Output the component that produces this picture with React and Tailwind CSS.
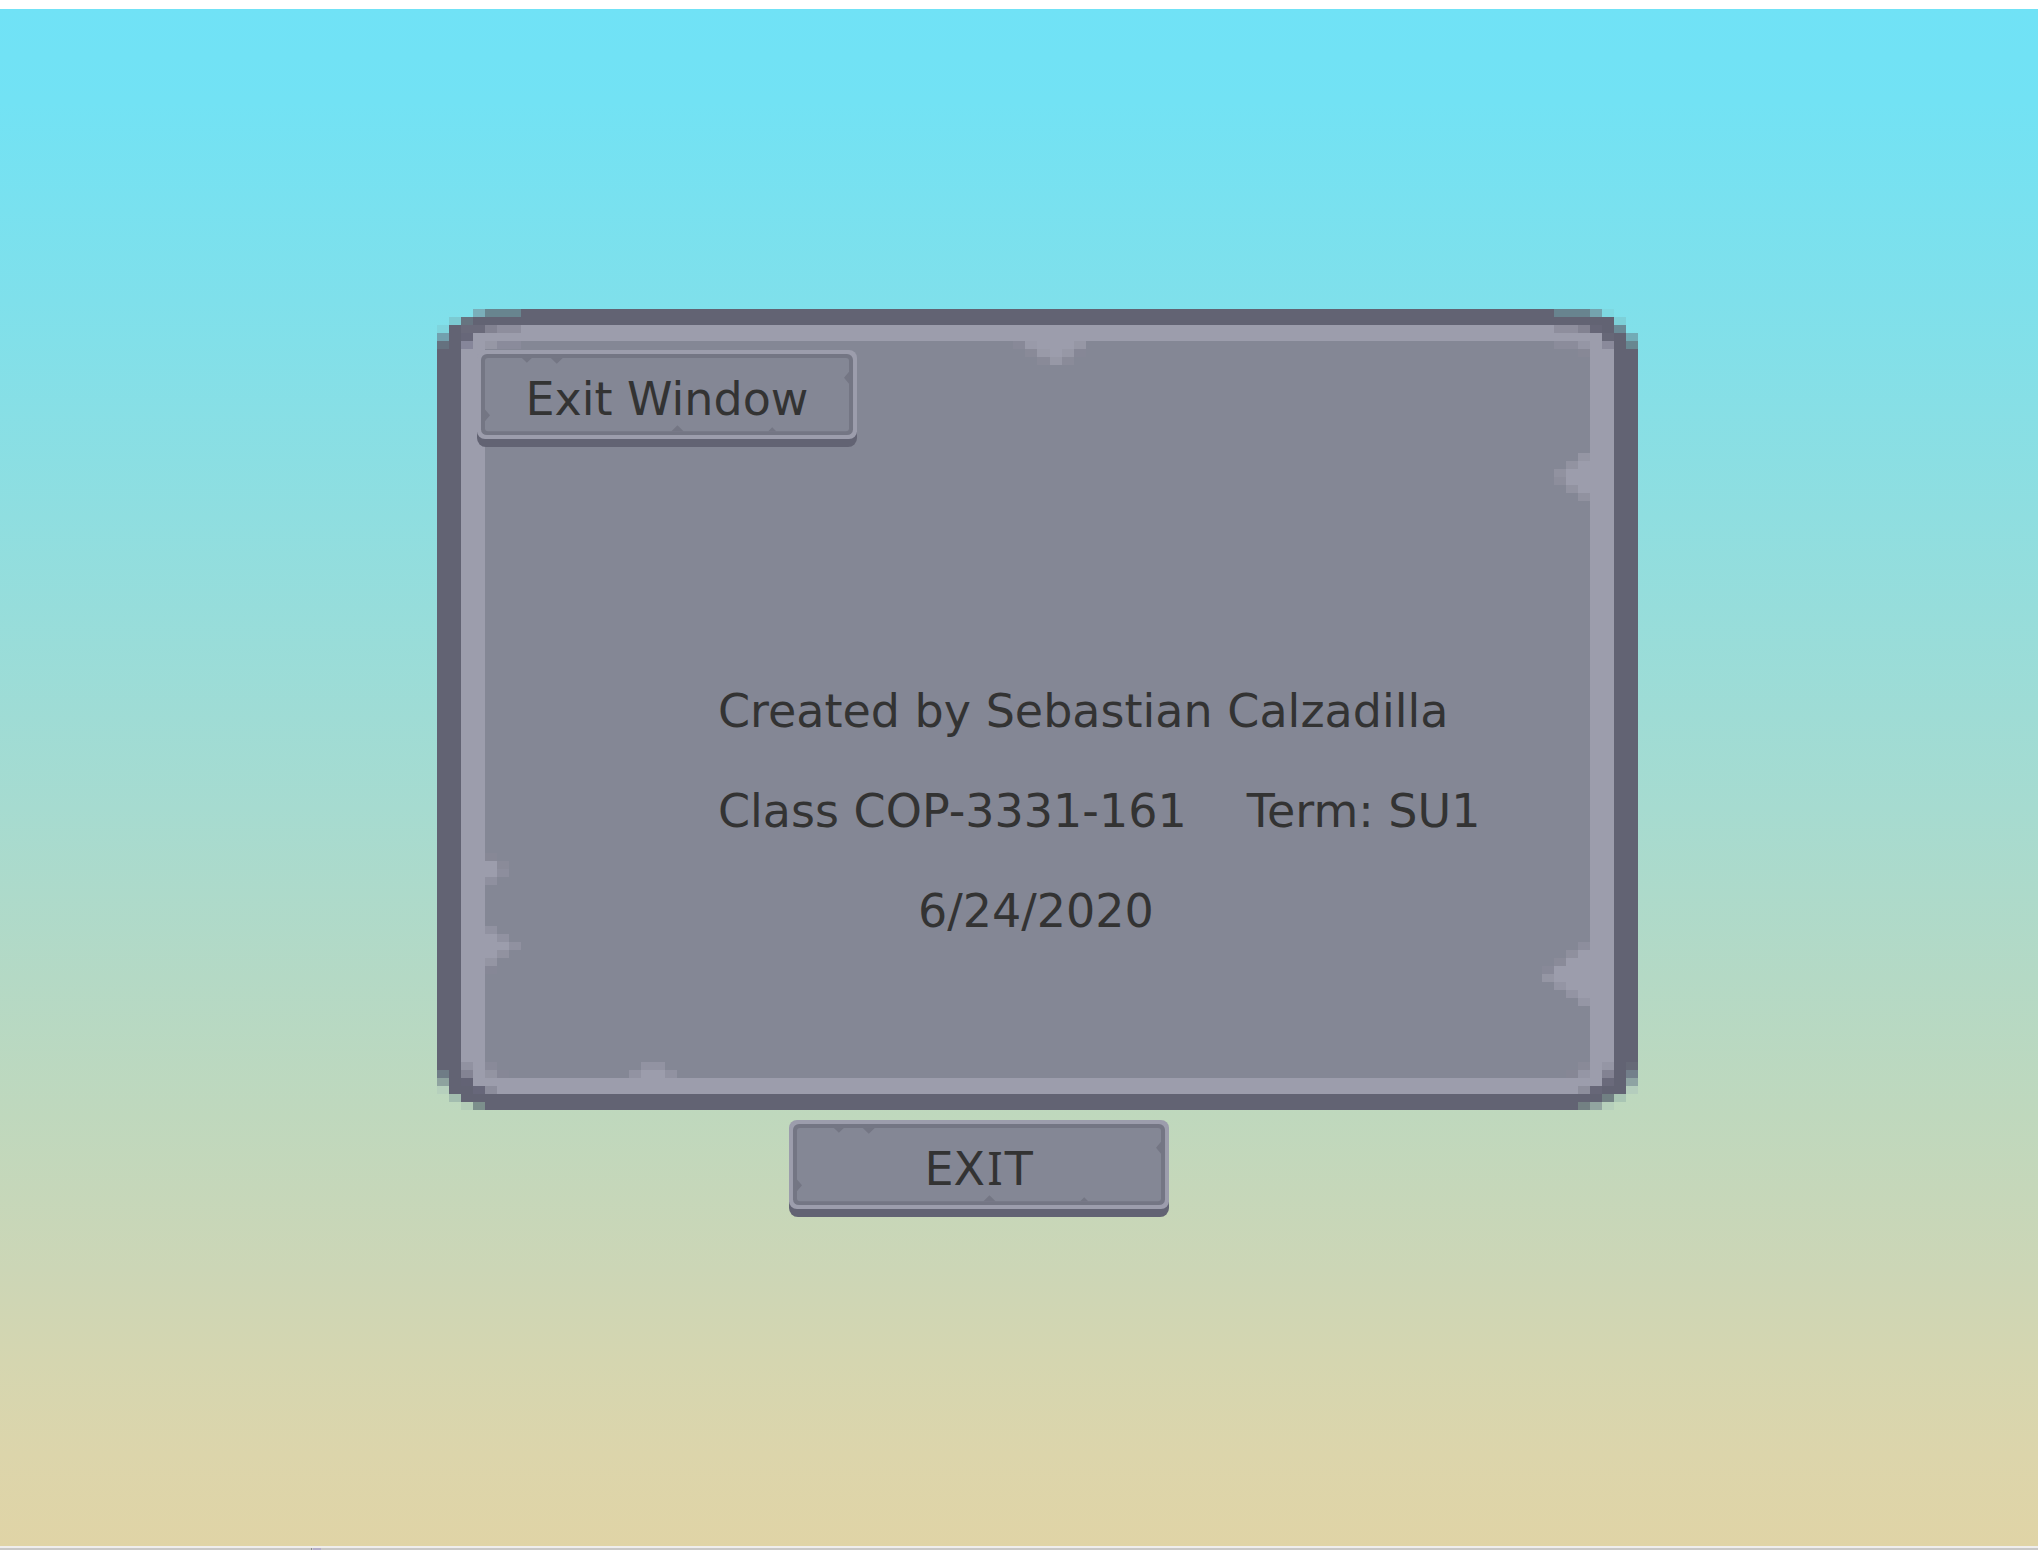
const DARK = "#626373";
const LIGHT = "#9c9dac";
const BODY = "#848795";

// Weathered pixels of the stone slab on a 100 x 100 grid: [column, row, width, colour]
const PIXELS = [
  // top left corner
  [3, 0, 1, "#7aafba"], [4, 0, 3, "#68858f"],
  [1, 1, 1, "#7ccad2"], [2, 1, 1, "#677480"], [3, 1, 4, DARK],
  [0, 2, 1, "#7fd4dd"], [1, 2, 1, DARK], [2, 2, 2, "#6a6a7a"], [4, 2, 1, "#828291"], [5, 2, 2, "#8e8e9d"],
  [0, 3, 1, "#72a0ae"], [1, 3, 1, DARK], [2, 3, 1, "#676779"], [3, 3, 4, LIGHT],
  [0, 4, 1, "#65717f"], [1, 4, 1, DARK], [2, 4, 1, "#86869a"], [3, 4, 1, LIGHT], [4, 4, 1, "#9697a5"], [5, 4, 2, "#8a8b9b"],
  // top right corner
  [93, 0, 3, "#68848f"], [96, 0, 1, "#74a3ae"], [97, 0, 1, "#7ed8e1"],
  [93, 1, 5, DARK], [98, 1, 1, "#7dd0d8"],
  [93, 2, 2, "#8e8e9d"], [95, 2, 1, "#828291"], [96, 2, 1, "#666677"], [97, 2, 1, DARK], [98, 2, 1, "#6a8a96"],
  [93, 3, 4, LIGHT], [97, 3, 1, "#666777"], [98, 3, 1, DARK], [99, 3, 1, "#72abb6"],
  [93, 4, 2, "#8b8c9b"], [95, 4, 1, "#9596a5"], [96, 4, 1, LIGHT], [97, 4, 1, "#8a8a9b"], [98, 4, 1, DARK], [99, 4, 1, "#688791"],
  [95, 5, 1, "#878896"],
  // top chip
  [48, 4, 1, "#888998"], [49, 4, 1, "#999aa9"], [50, 4, 3, LIGHT], [53, 4, 1, "#9697a5"],
  [49, 5, 1, "#898a98"], [50, 5, 1, "#999aa8"], [51, 5, 1, LIGHT], [52, 5, 1, "#9798a6"], [53, 5, 1, "#868796"],
  [50, 6, 1, "#898a98"], [51, 6, 1, "#9798a6"], [52, 6, 1, "#8a8b99"],
  // upper right chip
  [95, 18, 1, "#9596a4"],
  [94, 19, 1, "#9293a1"], [95, 19, 1, LIGHT],
  [93, 20, 1, "#9192a0"], [94, 20, 2, LIGHT],
  [93, 21, 1, "#8d8e9c"], [94, 21, 2, LIGHT],
  [94, 22, 1, "#9293a1"], [95, 22, 1, LIGHT],
  [95, 23, 1, "#9192a0"],
  // lower right chip
  [95, 79, 1, "#8d8e9d"],
  [94, 80, 1, "#8f909e"], [95, 80, 1, LIGHT],
  [93, 81, 1, "#8a8b99"], [94, 81, 2, LIGHT],
  [92, 82, 1, "#888998"], [93, 82, 3, LIGHT],
  [92, 83, 1, "#9596a4"], [93, 83, 3, LIGHT],
  [93, 84, 1, "#9495a4"], [94, 84, 2, LIGHT],
  [94, 85, 1, "#9394a3"], [95, 85, 1, LIGHT],
  [95, 86, 1, "#9596a5"],
  // left chips
  [4, 68, 1, "#878896"],
  [4, 69, 1, LIGHT], [5, 69, 1, "#8a8b99"],
  [4, 70, 1, LIGHT], [5, 70, 1, "#8d8e9d"],
  [4, 71, 1, "#8f909f"],
  [4, 77, 1, "#9192a1"],
  [4, 78, 1, LIGHT], [5, 78, 1, "#9192a1"],
  [4, 79, 2, LIGHT], [6, 79, 1, "#9091a0"],
  [4, 80, 1, LIGHT], [5, 80, 1, "#9192a0"],
  [4, 81, 1, "#9495a3"],
  [4, 82, 1, "#868796"],
  // bottom chip
  [17, 94, 2, "#9293a2"],
  [16, 95, 1, "#9293a2"], [17, 95, 2, LIGHT], [19, 95, 1, "#9192a1"],
  // bottom left corner
  [2, 94, 1, "#9192a1"], [4, 94, 1, "#898a99"],
  [0, 95, 1, "#6f7c86"], [1, 95, 1, DARK], [2, 95, 1, "#838393"], [4, 95, 1, "#9394a2"], [5, 95, 1, "#868796"],
  [0, 96, 1, "#8ea39f"], [1, 96, 1, DARK], [2, 96, 1, "#636375"],
  [0, 97, 1, "#b6d0bd"], [1, 97, 2, DARK], [3, 97, 1, "#67677a"], [4, 97, 1, "#8c8d9c"],
  [1, 98, 1, "#a3bdaf"], [2, 98, 5, DARK],
  [2, 99, 1, "#b3ccb7"], [3, 99, 1, "#7c8f8c"], [4, 99, 3, DARK],
  // bottom right corner
  [95, 94, 1, "#898a98"], [97, 94, 1, "#9596a5"], [99, 94, 1, "#666977"],
  [94, 95, 1, "#868795"], [95, 95, 1, "#9596a5"], [97, 95, 1, "#828292"], [98, 95, 1, DARK], [99, 95, 1, "#737f8b"],
  [97, 96, 1, "#6a6a7b"], [98, 96, 1, DARK], [99, 96, 1, "#8ea3a3"],
  [95, 97, 1, "#8d8e9c"], [96, 97, 1, "#676778"], [97, 97, 2, DARK], [99, 97, 1, "#b4cdbd"],
  [93, 98, 4, DARK], [97, 98, 1, "#718083"], [98, 98, 1, "#a9c5b4"],
  [93, 99, 2, DARK], [95, 99, 1, "#738183"], [96, 99, 1, "#92a5a0"], [97, 99, 1, "#b6d0bb"],
];

function StoneSlab() {
  return (
    <svg
      aria-hidden="true"
      className="absolute inset-0 h-full w-full"
      viewBox="0 0 100 100"
      preserveAspectRatio="none"
      shapeRendering="crispEdges"
    >
      <rect x="7" y="0" width="86" height="2" fill={DARK} />
      <rect x="7" y="98" width="86" height="2" fill={DARK} />
      <rect x="0" y="5" width="2" height="90" fill={DARK} />
      <rect x="98" y="5" width="2" height="90" fill={DARK} />
      <rect x="7" y="2" width="86" height="2" fill={LIGHT} />
      <rect x="2" y="5" width="96" height="91" fill={LIGHT} />
      <rect x="3" y="96" width="94" height="2" fill={LIGHT} />
      <rect x="7" y="4" width="86" height="2" fill={BODY} />
      <rect x="4" y="5" width="92" height="91" fill={BODY} />
      {PIXELS.map(([x, y, w, fill]) => (
        <rect key={`${x}-${y}`} x={x} y={y} width={w} height="1" fill={fill} />
      ))}
    </svg>
  );
}

function StoneButton({ children, className = "" }) {
  return (
    <button
      type="button"
      className={`relative flex h-[97px] w-[380px] cursor-pointer items-center justify-center ${className}`}
    >
      <svg
        aria-hidden="true"
        className="absolute inset-0 h-full w-full"
        viewBox="0 0 381 98"
        preserveAspectRatio="none"
      >
        <rect x="0" y="50" width="381" height="48" rx="9" fill={DARK} />
        <rect x="0" y="0" width="381" height="90" rx="8" fill={LIGHT} />
        <rect x="4" y="4" width="373" height="82" rx="6" fill="#747684" />
        <rect x="8" y="8" width="365" height="74" rx="3" fill={BODY} />
        <path
          fill="#747684"
          d="M45 8h10l-5 5zM74 8h12l-6 6zM373 22v12l-5-6zM8 60v12l5-6zM195 82h12l-6-6zM292 82h8l-4-4z"
        />
      </svg>
      <span className="relative">{children}</span>
    </button>
  );
}

export default function App() {
  return (
    <div className="flex min-h-screen flex-col bg-white font-['Verdana','DejaVu_Sans',sans-serif] text-[46px] leading-[100px] text-[#333333]">
      <main className="mt-[9px] flex-1 bg-[linear-gradient(to_bottom,#70e2f6_0%,#72e2f4_6%,#7fe0eb_19%,#8fdee0_33%,#a6dbd0_52%,#b4d9c5_63%,#bfd8bd_72%,#ccd6b6_82%,#d5d6b0_88%,#dcd5ab_94%,#e0d4a6_100%)] pt-[300px]">
        <section
          aria-label="Credits"
          className="relative ml-[21.44%] flex aspect-[3/2] w-[58.93%] flex-col"
        >
          <StoneSlab />
          <StoneButton className="mt-[41px] ml-[40px]">Exit Window</StoneButton>
          <div className="relative mt-[214px] ml-[23.4%]">
            <p>Created by Sebastian Calzadilla</p>
            <p className="flex gap-[60px]">
              <span>Class COP-3331-161</span>
              <span>Term: SU1</span>
            </p>
            <p className="ml-[200px]">6/24/2020</p>
          </div>
        </section>
        <StoneButton className="mt-[10px] ml-[38.7%]">
          EX<span className="mx-[2px] font-['Noto_Sans',sans-serif]">I</span>T
        </StoneButton>
      </main>
      <footer className="flex h-[4px] border-t-2 border-[#efeeec] bg-[#c9c8c6]">
        <div className="ml-[311px] w-px bg-[#8c8c94]" />
        <div className="ml-px w-[8px] bg-[#b4aec8]" />
      </footer>
    </div>
  );
}
